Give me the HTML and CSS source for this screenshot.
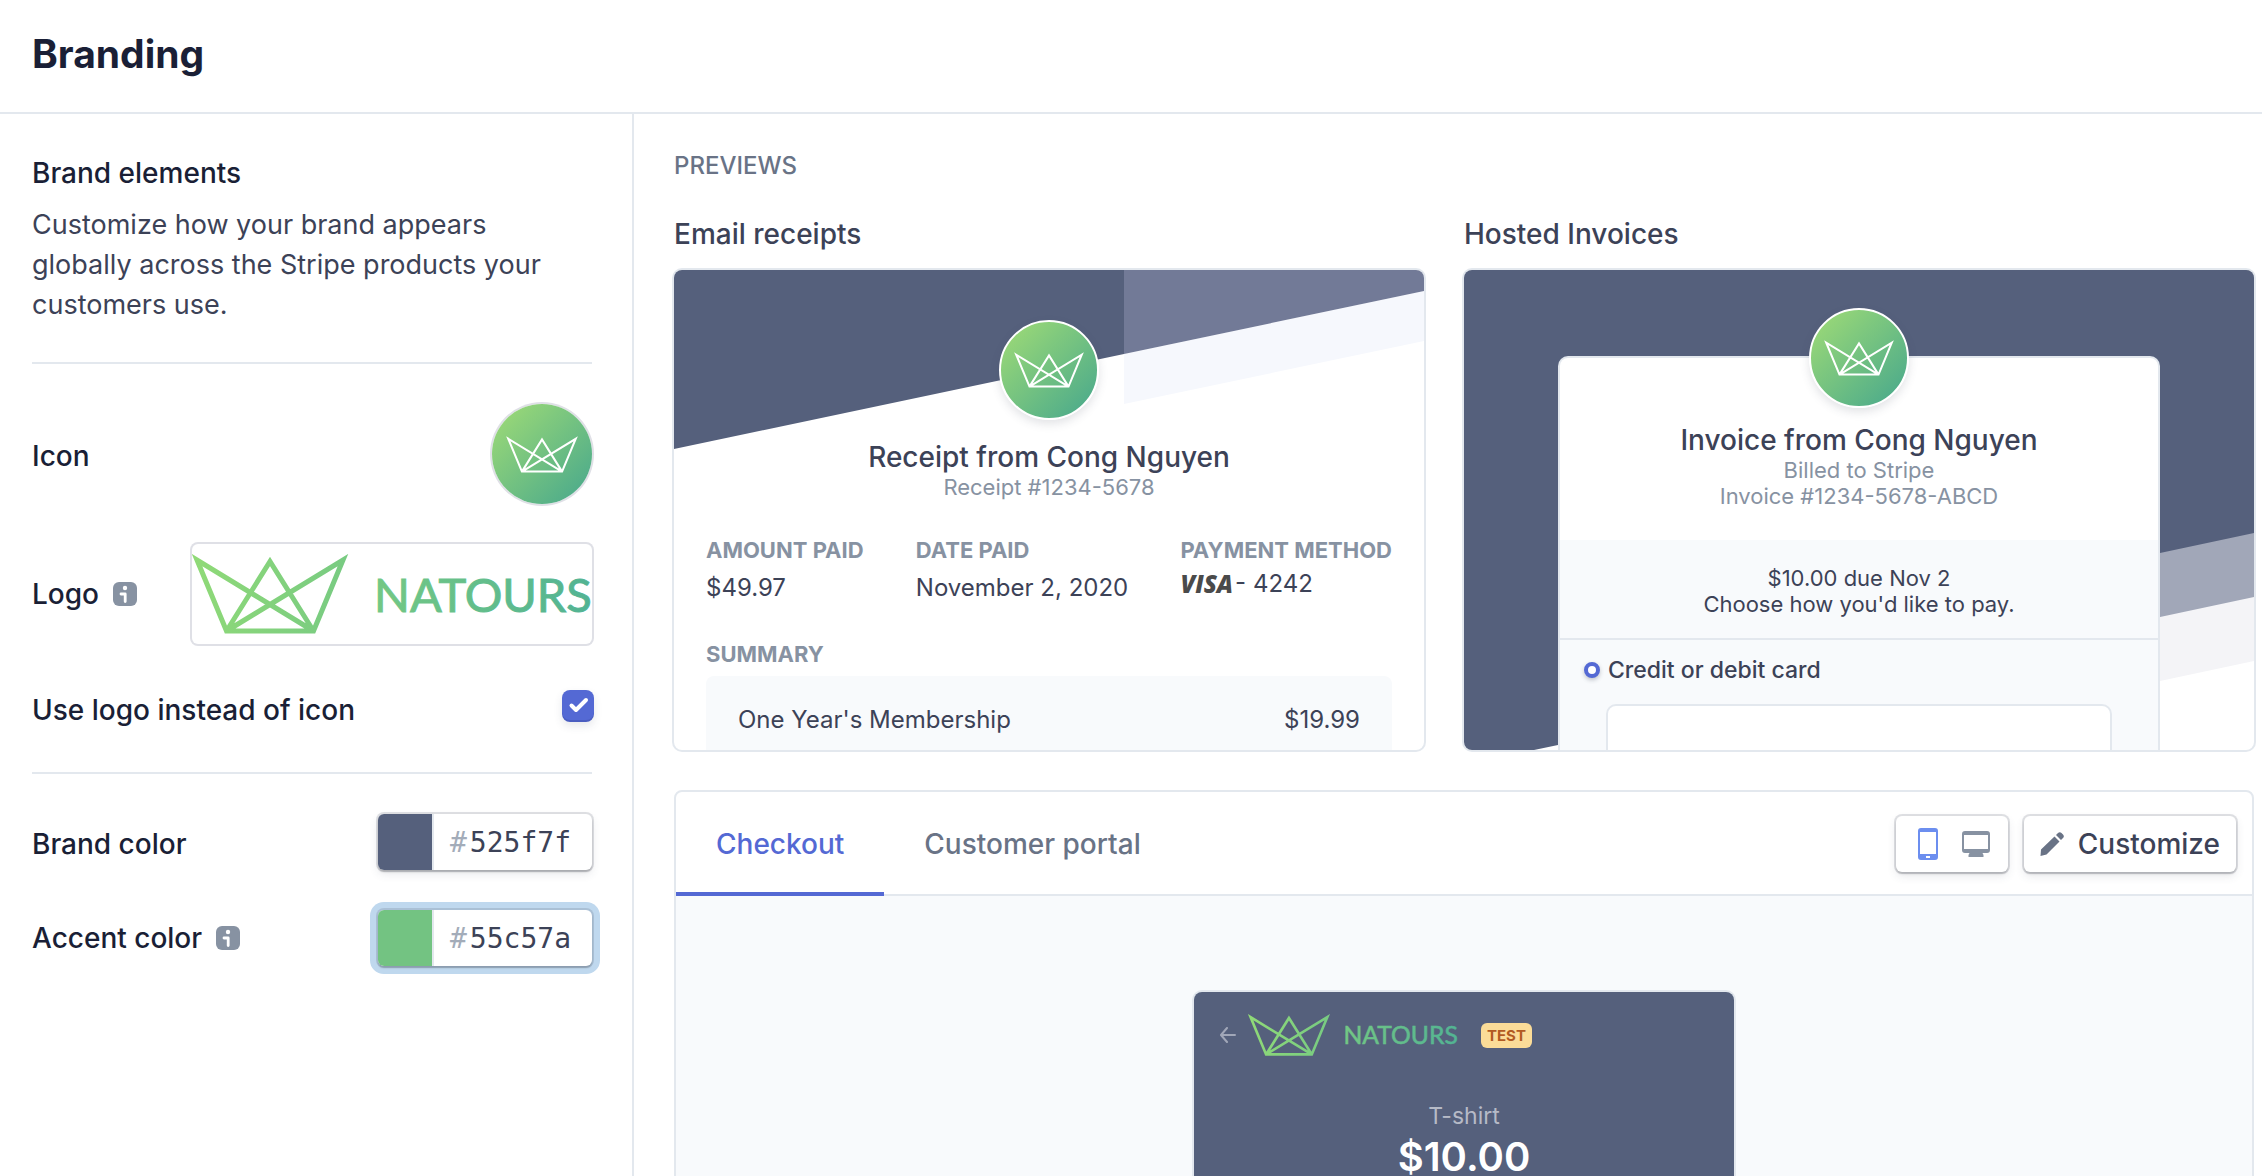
FILE: index.html
```html
<!DOCTYPE html>
<html lang="en">
<head>
<meta charset="utf-8">
<meta name="viewport" content="width=device-width, initial-scale=1">
<title>Branding</title>
<link rel="stylesheet" href="styles.css">
</head>
<body>
<svg class="defs" aria-hidden="true">
  <symbol id="crown" viewBox="0 0 156 80">
    <path d="M5 6 34.500 77H121.500L151 6 34.500 77 78 7.500 121.500 77Z" fill="none" stroke="currentColor" stroke-width="4.500"/>
  </symbol>
  <symbol id="info" viewBox="0 0 24 24">
    <rect width="24" height="24" rx="6" fill="#8792a2"/>
    <circle cx="12" cy="6" r="2.200" fill="#fff"/>
    <path d="M8 12h4.200v7.500" fill="none" stroke="#fff" stroke-width="2.800" stroke-linecap="round" stroke-linejoin="round"/>
  </symbol>
</svg>

<header class="topbar"><h1>Branding</h1></header>

<div class="layout">
  <aside class="sidebar">
    <h2>Brand elements</h2>
    <p class="intro">Customize how your brand appears globally across the Stripe products your customers use.</p>
    <hr>
    <div class="row">
      <span class="row-label">Icon</span>
      <button class="brand-icon icon-picker" aria-label="Change icon"><svg class="crown crown-lg"><use href="#crown"/></svg></button>
    </div>
    <div class="row">
      <span class="with-info"><span>Logo</span> <svg class="info"><use href="#info"/></svg></span>
      <button class="logo-picker" aria-label="Change logo">
        <svg class="logo" viewBox="0 0 400 80">
          <defs><linearGradient id="leaf" gradientUnits="userSpaceOnUse" x1="0" y1="0" x2="400" y2="40"><stop offset="0" stop-color="#90da77"/><stop offset="1" stop-color="#52b393"/></linearGradient></defs>
          <path d="M5 6 34.500 77H121.500L151 6 34.500 77 78 7.500 121.500 77Z" fill="none" stroke="url(#leaf)" stroke-width="5"/>
          <text class="wordmark" x="182" y="58" fill="url(#leaf)" stroke="url(#leaf)">NATOURS</text>
        </svg>
      </button>
    </div>
    <div class="row row-check">
      <label for="use-logo">Use logo instead of icon</label>
      <input class="checkbox" type="checkbox" id="use-logo" checked>
    </div>
    <hr>
    <div class="row">
      <label class="row-label" for="brand-color">Brand color</label>
      <div class="color-field">
        <input class="swatch" type="color" value="#55607c" aria-label="Pick brand color">
        <span class="hash">#</span><input class="hex" type="text" id="brand-color" value="525f7f">
      </div>
    </div>
    <div class="row">
      <span class="with-info"><label for="accent-color">Accent color</label> <svg class="info"><use href="#info"/></svg></span>
      <div class="color-field is-focused">
        <input class="swatch" type="color" value="#73c382" aria-label="Pick accent color">
        <span class="hash">#</span><input class="hex" type="text" id="accent-color" value="55c57a">
      </div>
    </div>
  </aside>

  <main class="content">
    <h2 class="eyebrow">PREVIEWS</h2>
    <div class="previews">
      <section>
        <h3>Email receipts</h3>
        <div class="card">
          <svg class="card-art" viewBox="0 0 750 480" preserveAspectRatio="none" aria-hidden="true">
            <path d="M450 84 750 21V71L450 134Z" fill="#f6f8fd"/>
            <path d="M0 0H450V84L0 179Z" fill="#55607c"/>
            <path d="M450 0H750V21L450 84Z" fill="#727a97"/>
          </svg>
          <div class="receipt">
            <div class="brand-icon avatar"><svg class="crown"><use href="#crown"/></svg></div>
            <h4>Receipt from Cong Nguyen</h4>
            <p class="muted">Receipt #1234-5678</p>
            <dl class="facts">
              <div><dt>AMOUNT PAID</dt><dd>$49.97</dd></div>
              <div><dt>DATE PAID</dt><dd>November 2, 2020</dd></div>
              <div><dt>PAYMENT METHOD</dt><dd class="method"><span class="visa">VISA</span>- 4242</dd></div>
            </dl>
            <h5>SUMMARY</h5>
            <div class="line-item"><span>One Year's Membership</span><span>$19.99</span></div>
          </div>
        </div>
      </section>
      <section>
        <h3>Hosted Invoices</h3>
        <div class="card">
          <svg class="card-art" viewBox="0 0 790 480" preserveAspectRatio="none" aria-hidden="true">
            <path d="M395 0H790V391L395 475Z" fill="#f4f4f7"/>
            <path d="M395 0H790V327L395 411Z" fill="#a1a7b8"/>
            <path d="M0 0H790V263L395 347V455L94 475 70 480H0Z" fill="#55607c"/>
          </svg>
          <div class="invoice">
            <div class="brand-icon avatar"><svg class="crown"><use href="#crown"/></svg></div>
            <h4>Invoice from Cong Nguyen</h4>
            <p class="muted">Billed to Stripe</p>
            <p class="muted">Invoice #1234-5678-ABCD</p>
            <div class="due"><p>$10.00 due Nov 2</p><p>Choose how you'd like to pay.</p></div>
            <div class="pay">
              <label><input class="radio" type="radio" name="pay" checked>Credit or debit card</label>
              <div class="card-entry"></div>
            </div>
          </div>
        </div>
      </section>
    </div>

    <section class="panel">
      <div class="panel-head">
        <div class="tabs" role="tablist">
          <button class="tab is-active" role="tab" aria-selected="true">Checkout</button>
          <button class="tab" role="tab" aria-selected="false">Customer portal</button>
        </div>
        <div class="actions">
          <div class="control devices">
            <button class="device" aria-label="Mobile preview">
              <svg width="20" height="32" viewBox="0 0 20 32"><path fill="#6c8eef" fill-rule="evenodd" d="M3 0H17a3 3 0 0 1 3 3V29a3 3 0 0 1-3 3H3a3 3 0 0 1-3-3V3a3 3 0 0 1 3-3ZM2 4V26H18V4ZM8 28V30H12V28Z"/></svg>
            </button>
            <button class="device" aria-label="Desktop preview">
              <svg width="28" height="26" viewBox="0 0 28 26"><path fill="#8792a2" fill-rule="evenodd" d="M3 0H25a3 3 0 0 1 3 3V19a3 3 0 0 1-3 3H20.500L21.500 24V26H6.500V24L7.500 22H3a3 3 0 0 1-3-3V3a3 3 0 0 1 3-3ZM2 4V18H26V4Z"/></svg>
            </button>
          </div>
          <button class="control customize">
            <svg width="24" height="24" viewBox="0 0 24 24"><path fill="#697386" d="M14.500 4.500 19.500 9.500 6.500 22.500 0.500 24 1 17.500ZM18 1a2.500 2.500 0 0 1 3.500 0L23 2.500a2.500 2.500 0 0 1 0 3.500L21 8 16 3Z"/></svg>
            Customize
          </button>
        </div>
      </div>
      <div class="stage">
        <div class="checkout">
          <div class="checkout-bar">
            <svg width="16" height="16" viewBox="0 0 16 16" fill="none" stroke="#a1a7b8" stroke-width="2" stroke-linecap="round" stroke-linejoin="round"><path d="M7 1 1 8 7 15M1 8H15"/></svg>
            <svg class="logo logo-sm" viewBox="0 0 400 80">
              <path d="M5 6 34.500 77H121.500L151 6 34.500 77 78 7.500 121.500 77Z" fill="none" stroke="url(#leaf)" stroke-width="5"/>
              <text class="wordmark" x="182" y="58" fill="url(#leaf)" stroke="url(#leaf)">NATOURS</text>
            </svg>
            <span class="badge">TEST</span>
          </div>
          <p class="product">T-shirt</p>
          <p class="price">$10.00</p>
        </div>
      </div>
    </section>
  </main>
</div>
</body>
</html>
```
FILE: styles.css
```css
:root {
  --ink: #1a1f36;
  --text: #3c4257;
  --slate: #697386;
  --muted: #8792a2;
  --line: #e3e8ee;
  --wash: #f8fafc;
  --brand: #55607c;
  --primary: #5469d4;
}

* { box-sizing: border-box; }

body {
  margin: 0;
  height: 100vh;
  overflow: hidden;
  display: flex;
  flex-direction: column;
  background: #fff;
  color: var(--text);
  font: 400 28px/40px Inter, "Liberation Sans", sans-serif;
}

h1, h2, h3, h4, h5, p, dl, dd { margin: 0; }
button, input { font: inherit; color: inherit; }
button { border: 0; padding: 0; background: none; cursor: pointer; }
svg { display: block; flex: none; }
.defs { position: absolute; width: 0; height: 0; }

.topbar {
  padding: 30px 32px 34px;
  border-bottom: 2px solid var(--line);
}
h1 { font-size: 39px; line-height: 48px; font-weight: 700; color: var(--ink); }

.layout { flex: 1; min-height: 0; display: flex; }

/* Sidebar */
.sidebar {
  flex: none;
  width: 634px;
  padding: 39px 40px 0 32px;
  border-right: 2px solid var(--line);
  color: var(--ink);
}
.sidebar h2 { font-size: 28px; font-weight: 500; }
.intro { margin-top: 12px; font-size: 27px; color: var(--text); }
hr { height: 2px; margin: 37px 0 40px; border: 0; background: var(--line); }
.row {
  display: flex;
  align-items: center;
  justify-content: space-between;
  font-weight: 500;
}
.row + .row { margin-top: 40px; }
.row.row-check { align-items: flex-start; margin-top: 46px; }
.row-check + hr { margin-top: 42px; }
.row-label { padding-top: 4px; }
.with-info { display: flex; align-items: center; gap: 14px; }
.info { width: 24px; height: 24px; }

.brand-icon {
  display: grid;
  place-items: center;
  width: 100px;
  height: 100px;
  border-radius: 50%;
  color: #fff;
  background: linear-gradient(135deg, #96d678 12%, #50ad8a 88%);
}
.icon-picker { box-shadow: 0 0 0 2px #dfe0e6; }
.crown { width: 70px; height: 36px; }
.crown-lg { width: 72px; height: 37px; }

.logo-picker {
  display: flex;
  align-items: center;
  width: 400px;
  height: 100px;
  border-radius: 6px;
  box-shadow: 0 0 0 2px #dfe0e6;
  overflow: hidden;
}
.logo { width: 400px; height: 80px; }
.logo-sm { width: 210px; height: 42px; }
.wordmark { font: 400 47px Lato, sans-serif; stroke-width: 1; }

.checkbox {
  appearance: none;
  width: 32px;
  height: 32px;
  margin: 0 -2px 0 0;
  border-radius: 8px;
  background: var(--primary) url("data:image/svg+xml,%3Csvg xmlns='http://www.w3.org/2000/svg' viewBox='0 0 32 32'%3E%3Cpath d='M9.500 15.500 14 20 24 10' fill='none' stroke='white' stroke-width='4' stroke-linecap='round' stroke-linejoin='round'/%3E%3C/svg%3E");
  box-shadow: inset 0 -2px 0 #4a5dc0, 0 4px 8px rgba(60, 66, 87, .12);
}

.color-field {
  display: flex;
  align-items: center;
  width: 214px;
  height: 56px;
  border-radius: 6px;
  overflow: hidden;
  background: #fff;
  box-shadow: 0 0 0 2px rgba(60, 66, 87, .16), 0 2px 2px rgba(0, 0, 0, .2), 0 4px 10px rgba(60, 66, 87, .12);
  font: 400 28px/56px "DejaVu Sans Mono", monospace;
}
.color-field.is-focused {
  box-shadow: 0 0 0 2px rgba(60, 66, 87, .16), 0 2px 2px rgba(0, 0, 0, .2), 0 0 0 8px #bfd8ee;
}
.swatch {
  appearance: none;
  flex: none;
  width: 56px;
  height: 56px;
  padding: 0;
  border: 0;
  border-right: 2px solid var(--line);
  background: none;
}
.swatch::-webkit-color-swatch-wrapper { padding: 0; }
.swatch::-webkit-color-swatch { border: 0; border-radius: 0; }
.hash { padding: 2px 0 0 16px; color: #a3acb9; }
.hex {
  flex: 1;
  min-width: 0;
  height: 56px;
  padding: 2px 0 0 3px;
  border: 0;
  outline: 0;
  background: none;
  color: var(--text);
}

/* Previews */
.content { flex: 1; min-width: 0; padding: 36px 8px 0 40px; }
.eyebrow { font-size: 24px; line-height: 32px; font-weight: 500; color: var(--slate); }
.previews {
  display: grid;
  grid-template-columns: 75fr 79fr;
  gap: 40px;
  margin-top: 32px;
}
h3 { font-size: 28px; font-weight: 500; }
.card {
  position: relative;
  height: 480px;
  margin-top: 16px;
  border-radius: 8px;
  overflow: hidden;
  background: #fff;
  box-shadow: 0 0 0 2px var(--line);
}
.card-art { position: absolute; inset: 0; width: 100%; height: 100%; }
.avatar {
  margin: 0 auto;
  border: 2px solid #fff;
  box-shadow: 0 4px 10px rgba(60, 66, 87, .15);
}
h4 { font-size: 28px; line-height: 34px; font-weight: 500; text-align: center; }
.muted { font-size: 22px; line-height: 26px; color: var(--muted); text-align: center; }

.receipt { position: relative; padding: 50px 32px 0; }
.receipt h4 { margin-top: 20px; }
.facts { display: flex; justify-content: space-between; margin-top: 38px; font-size: 24px; }
dt, h5 { font-size: 22px; line-height: 24px; font-weight: 700; color: var(--muted); }
dd { margin-top: 10px; line-height: 32px; }
dd.method { display: flex; gap: 2px; line-height: 24px; }
.visa { font: italic 800 24px/24px "Open Sans", sans-serif; color: #4a4a4a; }
h5 { margin-top: 38px; }
.line-item {
  display: flex;
  justify-content: space-between;
  height: 100px;
  margin-top: 10px;
  padding: 28px 32px;
  border-radius: 8px;
  background: var(--wash);
  font-size: 24px;
  line-height: 32px;
}

.invoice {
  position: relative;
  width: 598px;
  height: 600px;
  margin: 88px auto 0;
  border-radius: 8px;
  background: #fff;
  box-shadow: 0 0 0 2px var(--line);
  font-size: 22px;
}
.invoice .avatar { position: relative; top: -50px; margin-bottom: -50px; }
.invoice h4 { margin-top: 15px; }
.due {
  margin-top: 31px;
  padding: 25px 0 21px;
  border-bottom: 2px solid var(--line);
  background: var(--wash);
  line-height: 26px;
  text-align: center;
}
.pay { height: 200px; padding: 18px 48px 0 24px; background: var(--wash); }
.pay label { display: flex; align-items: center; gap: 8px; font-size: 23px; line-height: 24px; font-weight: 500; }
.radio {
  appearance: none;
  width: 16px;
  height: 16px;
  margin: 0;
  border: 4px solid var(--primary);
  border-radius: 50%;
  background: #fff;
  box-shadow: 0 2px 4px rgba(60, 66, 87, .3);
}
.card-entry {
  height: 120px;
  margin: 22px -2px 0 22px;
  border: 2px solid var(--line);
  border-radius: 10px;
  background: #fff;
}

/* Checkout panel */
.panel {
  margin-top: 40px;
  border: 2px solid var(--line);
  border-radius: 8px;
  overflow: hidden;
}
.panel-head {
  display: flex;
  justify-content: space-between;
  height: 104px;
  padding-right: 16px;
  box-shadow: inset 0 -2px 0 var(--line);
}
.tabs { display: flex; }
.tab { padding: 0 40px; color: var(--slate); font-weight: 500; }
.tab.is-active { color: var(--primary); box-shadow: inset 0 -4px 0 var(--primary); }
.actions { display: flex; align-items: center; gap: 16px; }
.control {
  display: flex;
  align-items: center;
  height: 56px;
  border-radius: 6px;
  background: #fff;
  box-shadow: 0 0 0 2px rgba(60, 66, 87, .16), 0 2px 2px rgba(0, 0, 0, .16), 0 4px 10px rgba(60, 66, 87, .12);
}
.devices { justify-content: space-between; width: 112px; padding: 0 18px 0 22px; }
.customize { gap: 14px; padding: 0 16px; font-weight: 500; }
.stage { padding-top: 96px; background: var(--wash); }
.checkout {
  width: 540px;
  height: 720px;
  margin: 0 auto;
  padding-top: 22px;
  border-radius: 8px;
  background: var(--brand);
  box-shadow: 0 0 0 2px var(--line);
  color: #fff;
  text-align: center;
}
.checkout-bar { display: flex; align-items: center; gap: 12px; padding-left: 26px; }
.badge {
  margin-left: 11px;
  padding: 0 6px;
  border-radius: 6px;
  background: #fbdc98;
  color: #b25a23;
  font-size: 15px;
  line-height: 25px;
  font-weight: 700;
}
.product { margin-top: 46px; font-size: 23px; line-height: 28px; color: #b6bac7; }
.price { font-size: 40px; line-height: 54px; font-weight: 600; }
```
